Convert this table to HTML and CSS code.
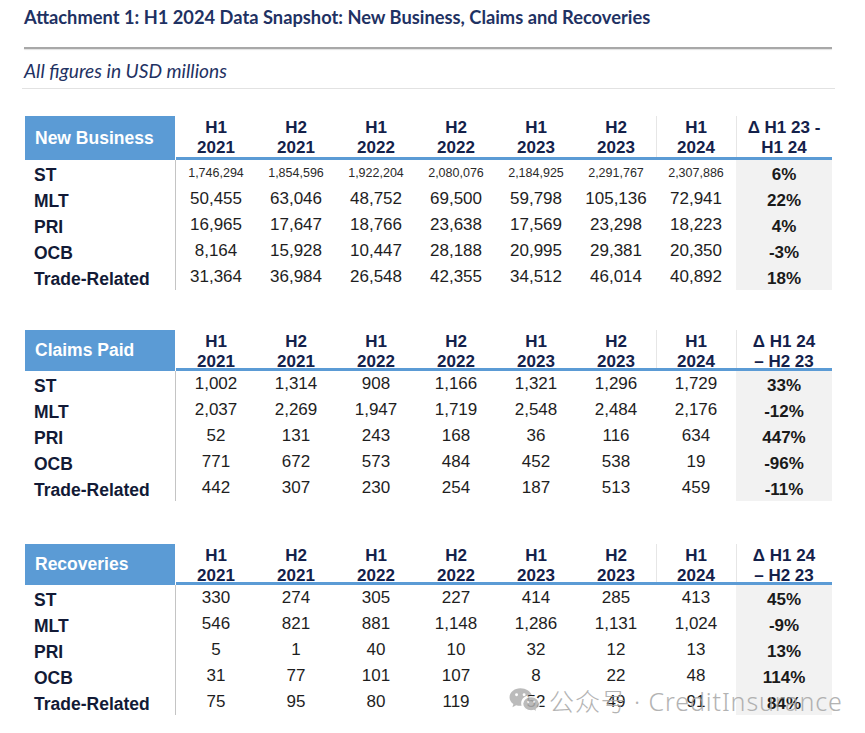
FILE: index.html
```html
<!DOCTYPE html>
<html lang="en">
<head>
<meta charset="utf-8">
<title>H1 2024 Data Snapshot</title>
<link rel="stylesheet" href="styles.css">
</head>
<body>
<div class="page">
  <h1 class="title">Attachment 1: H1 2024 Data Snapshot: New Business, Claims and Recoveries</h1>
  <div class="rule-heavy"></div>
  <p class="subtitle">All figures in USD millions</p>
  <div class="rule-light"></div>

  <div class="snap snap-first">
    <div class="hd-label">New Business</div>
    <div class="hd">H1<br>2021</div>
    <div class="hd">H2<br>2021</div>
    <div class="hd">H1<br>2022</div>
    <div class="hd">H2<br>2022</div>
    <div class="hd">H1<br>2023</div>
    <div class="hd">H2<br>2023</div>
    <div class="hd hd-sep">H1<br>2024</div>
    <div class="hd hd-sep">Δ H1 23 -<br>H1 24</div>

    <div class="lbl">ST</div>
    <div class="num small">1,746,294</div><div class="num small">1,854,596</div><div class="num small">1,922,204</div><div class="num small">2,080,076</div><div class="num small">2,184,925</div><div class="num small">2,291,767</div><div class="num small">2,307,886</div>
    <div class="delta">6%</div>

    <div class="lbl">MLT</div>
    <div class="num">50,455</div><div class="num">63,046</div><div class="num">48,752</div><div class="num">69,500</div><div class="num">59,798</div><div class="num">105,136</div><div class="num">72,941</div>
    <div class="delta">22%</div>

    <div class="lbl">PRI</div>
    <div class="num">16,965</div><div class="num">17,647</div><div class="num">18,766</div><div class="num">23,638</div><div class="num">17,569</div><div class="num">23,298</div><div class="num">18,223</div>
    <div class="delta">4%</div>

    <div class="lbl">OCB</div>
    <div class="num">8,164</div><div class="num">15,928</div><div class="num">10,447</div><div class="num">28,188</div><div class="num">20,995</div><div class="num">29,381</div><div class="num">20,350</div>
    <div class="delta">-3%</div>

    <div class="lbl">Trade-Related</div>
    <div class="num">31,364</div><div class="num">36,984</div><div class="num">26,548</div><div class="num">42,355</div><div class="num">34,512</div><div class="num">46,014</div><div class="num">40,892</div>
    <div class="delta">18%</div>
  </div>

  <div class="snap snap-second">
    <div class="hd-label">Claims Paid</div>
    <div class="hd">H1<br>2021</div>
    <div class="hd">H2<br>2021</div>
    <div class="hd">H1<br>2022</div>
    <div class="hd">H2<br>2022</div>
    <div class="hd">H1<br>2023</div>
    <div class="hd">H2<br>2023</div>
    <div class="hd hd-sep">H1<br>2024</div>
    <div class="hd hd-sep">Δ H1 24<br>– H2 23</div>

    <div class="lbl">ST</div>
    <div class="num">1,002</div><div class="num">1,314</div><div class="num">908</div><div class="num">1,166</div><div class="num">1,321</div><div class="num">1,296</div><div class="num">1,729</div>
    <div class="delta">33%</div>

    <div class="lbl">MLT</div>
    <div class="num">2,037</div><div class="num">2,269</div><div class="num">1,947</div><div class="num">1,719</div><div class="num">2,548</div><div class="num">2,484</div><div class="num">2,176</div>
    <div class="delta">-12%</div>

    <div class="lbl">PRI</div>
    <div class="num">52</div><div class="num">131</div><div class="num">243</div><div class="num">168</div><div class="num">36</div><div class="num">116</div><div class="num">634</div>
    <div class="delta">447%</div>

    <div class="lbl">OCB</div>
    <div class="num">771</div><div class="num">672</div><div class="num">573</div><div class="num">484</div><div class="num">452</div><div class="num">538</div><div class="num">19</div>
    <div class="delta">-96%</div>

    <div class="lbl">Trade-Related</div>
    <div class="num">442</div><div class="num">307</div><div class="num">230</div><div class="num">254</div><div class="num">187</div><div class="num">513</div><div class="num">459</div>
    <div class="delta">-11%</div>
  </div>

  <div class="snap snap-third">
    <div class="hd-label">Recoveries</div>
    <div class="hd">H1<br>2021</div>
    <div class="hd">H2<br>2021</div>
    <div class="hd">H1<br>2022</div>
    <div class="hd">H2<br>2022</div>
    <div class="hd">H1<br>2023</div>
    <div class="hd">H2<br>2023</div>
    <div class="hd hd-sep">H1<br>2024</div>
    <div class="hd hd-sep">Δ H1 24<br>– H2 23</div>

    <div class="lbl">ST</div>
    <div class="num">330</div><div class="num">274</div><div class="num">305</div><div class="num">227</div><div class="num">414</div><div class="num">285</div><div class="num">413</div>
    <div class="delta">45%</div>

    <div class="lbl">MLT</div>
    <div class="num">546</div><div class="num">821</div><div class="num">881</div><div class="num">1,148</div><div class="num">1,286</div><div class="num">1,131</div><div class="num">1,024</div>
    <div class="delta">-9%</div>

    <div class="lbl">PRI</div>
    <div class="num">5</div><div class="num">1</div><div class="num">40</div><div class="num">10</div><div class="num">32</div><div class="num">12</div><div class="num">13</div>
    <div class="delta">13%</div>

    <div class="lbl">OCB</div>
    <div class="num">31</div><div class="num">77</div><div class="num">101</div><div class="num">107</div><div class="num">8</div><div class="num">22</div><div class="num">48</div>
    <div class="delta">114%</div>

    <div class="lbl">Trade-Related</div>
    <div class="num">75</div><div class="num">95</div><div class="num">80</div><div class="num">119</div><div class="num">52</div><div class="num">49</div><div class="num">91</div>
    <div class="delta">84%</div>
  </div>

  <div class="watermark">
    <svg class="wm-icon" width="33" height="29" viewBox="0 0 32 28">
      <path d="M12 2C6 2 1.5 6 1.5 10.8c0 2.7 1.4 5 3.7 6.6L4.3 20.5l3.6-1.9c1.3.4 2.6.6 4.1.6.4 0 .8 0 1.2-.1-.3-.8-.4-1.6-.4-2.4 0-4.5 4.2-8 9.4-8h.8C21.9 4.9 17.4 2 12 2z" fill="#b0b0b0"/>
      <path d="M22.4 10.2c-4.6 0-8.2 3.1-8.2 6.9s3.6 6.9 8.2 6.9c1 0 1.9-.1 2.8-.4l3 1.6-.8-2.6c1.9-1.3 3.1-3.3 3.1-5.5 0-3.8-3.6-6.9-8.1-6.9z" fill="#b0b0b0" stroke="#fff" stroke-width="1.2"/>
      <circle cx="8.3" cy="8.4" r="1.4" fill="#fff"/>
      <circle cx="15.6" cy="8.4" r="1.4" fill="#fff"/>
      <circle cx="19.6" cy="15.3" r="1.1" fill="#fff"/>
      <circle cx="25.3" cy="15.3" r="1.1" fill="#fff"/>
    </svg>
    <span class="wm-text">公众号 · CreditInsurance</span>
  </div>
</div>
</body>
</html>
```

FILE: styles.css
```css
* {
  box-sizing: border-box;
}

body {
  margin: 0;
  background: #ffffff;
  font-family: "Liberation Sans", Arial, sans-serif;
}

.page {
  position: relative;
  width: 865px;
  height: 733px;
  padding-left: 24px;
  overflow: hidden;
}

.title {
  margin: 0;
  padding-top: 6px;
  font-family: Lato, "Open Sans", sans-serif;
  font-weight: 700;
  font-size: 18.3px;
  line-height: 22px;
  color: #1f3263;
  white-space: nowrap;
}

.rule-heavy {
  margin-top: 19px;
  width: 808px;
  height: 2px;
  background: #a8a8a8;
  box-shadow: 0 1px 1px rgba(0, 0, 0, 0.12);
}

.subtitle {
  margin: 11px 0 0 0;
  font-family: Lato, "Open Sans", sans-serif;
  font-style: italic;
  font-size: 19.2px;
  line-height: 22px;
  color: #1f3263;
}

.rule-light {
  margin-top: 6px;
  margin-left: -2px;
  width: 813px;
  height: 1px;
  background: #e2e2e2;
}

.snap {
  display: grid;
  grid-template-columns: 151px repeat(7, 80px) 96px;
  grid-auto-rows: 26px;
  margin-left: 1px;
  width: 807px;
}

.snap-first {
  margin-top: 27px;
  grid-template-rows: 44px;
}

.snap-second {
  margin-top: 40px;
  grid-template-rows: 41px;
}

.snap-third {
  margin-top: 43px;
  grid-template-rows: 41px;
}

.hd-label {
  background: #5b9bd5;
  color: #ffffff;
  font-weight: 700;
  font-size: 17.5px;
  display: flex;
  align-items: center;
  padding-left: 10px;
  margin-right: 1px;
}

.hd {
  text-align: center;
  font-weight: 700;
  font-size: 17px;
  line-height: 19.5px;
  color: #14214a;
  padding-top: 2px;
  border-bottom: 3px solid #5b9bd5;
}

.hd-sep {
  box-shadow: inset 1px 0 0 #e6e6e6;
}

.lbl {
  display: flex;
  align-items: center;
  padding-left: 9px;
  padding-top: 5px;
  font-weight: 700;
  font-size: 17.5px;
  color: #121a36;
  border-right: 1px solid #c4c4c4;
  white-space: nowrap;
}

.num {
  display: flex;
  align-items: center;
  justify-content: center;
  font-size: 17px;
  color: #1e1e1e;
}

.num.small {
  font-size: 12.5px;
  color: #2a2a2a;
  padding-bottom: 1px;
}

.delta {
  display: flex;
  align-items: center;
  justify-content: center;
  padding-top: 3px;
  background: #f2f2f2;
  font-weight: 700;
  font-size: 17px;
  color: #1a1a1a;
}

.watermark {
  position: absolute;
  left: 508px;
  top: 682px;
  display: flex;
  align-items: center;
  gap: 8px;
  opacity: 0.85;
}

.wm-text {
  font-family: "Noto Sans", "Noto Sans CJK SC", sans-serif;
  font-weight: 300;
  font-size: 25px;
  letter-spacing: 0.9px;
  color: #a6a6a6;
  white-space: nowrap;
}
```
